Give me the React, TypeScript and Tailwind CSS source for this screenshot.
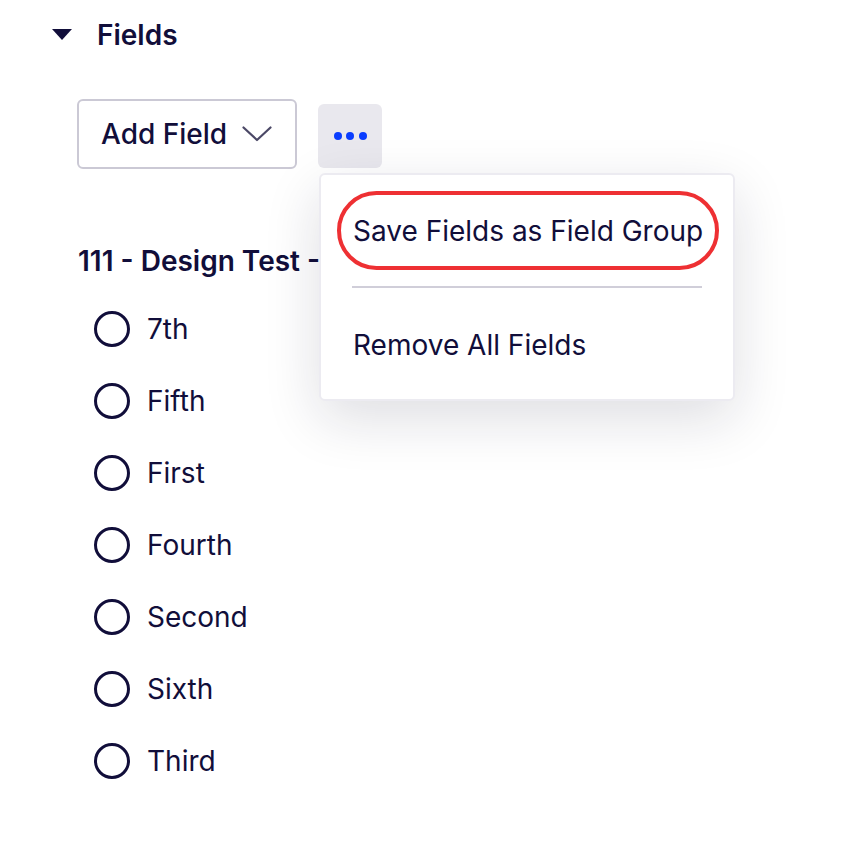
const options = ["7th", "Fifth", "First", "Fourth", "Second", "Sixth", "Third"];

const FieldsPanel = () => {
  return (
    <div className="min-h-screen bg-white font-['Inter','Noto_Sans',sans-serif] text-[#110e3a]">
      <div className="pl-[52px] pt-[19px]">
        {/* section header */}
        <div className="flex h-8 items-center gap-[25px]">
          <svg width="20" height="12" viewBox="0 0 20 12" aria-hidden>
            <path d="M0 0 H20 L10 11 Z" fill="#110e3a" />
          </svg>
          <span className="text-[28px] font-semibold leading-8">Fields</span>
        </div>

        {/* actions */}
        <div className="ml-[25px] mt-[48px] flex items-start gap-[21px]">
          <button className="flex h-[70px] w-[220px] items-center justify-between rounded-[6px] border-2 border-[#cbc9d5] bg-white pl-[22px] pr-[23px]">
            <span className="text-[28px] font-medium leading-8">Add Field</span>
            <svg width="30" height="16" viewBox="0 0 30 16" aria-hidden>
              <path d="M1.5 1.5 L15 14 L28.5 1.5" fill="none" stroke="#4b4866" strokeWidth="2.2" strokeLinecap="round" strokeLinejoin="round" />
            </svg>
          </button>

          <div className="relative mt-[5px]">
            <button className="flex h-[64px] w-[64px] items-center justify-center gap-[4.5px] rounded-[6px] bg-[#e9e8ee]">
              <span className="h-[8px] w-[8px] rounded-full bg-[#0a3dff]" />
              <span className="h-[8px] w-[8px] rounded-full bg-[#0a3dff]" />
              <span className="h-[8px] w-[8px] rounded-full bg-[#0a3dff]" />
            </button>

            {/* dropdown menu */}
            <div className="absolute left-px top-[69px] z-10 h-[228px] w-[416px] rounded-[6px] border-2 border-[#ecebf1] bg-white px-[16px] pt-[16px] shadow-[0_18px_56px_rgba(20,18,50,0.14)]">
              <div className="flex h-[79px] w-[382px] items-center rounded-full border-4 border-[#ee3033] pl-[12px]">
                <span className="whitespace-nowrap text-[28px] leading-8">Save Fields as Field Group</span>
              </div>
              <div className="ml-[15px] mt-[16px] h-[2px] w-[350px] bg-[#d0ced9]" />
              <div className="ml-[16px] mt-[41px] text-[28px] leading-8">Remove All Fields</div>
            </div>
          </div>
        </div>

        {/* field options */}
        <div className="ml-[26px] mt-[76px]">
          <div className="whitespace-nowrap text-[28px] font-semibold leading-8">111 - Design Test - Radio Buttons</div>
          <div className="mt-[16px] flex flex-col">
            {options.map((o) => (
              <label key={o} className="flex h-[72px] items-center gap-[17px] pl-[16px]">
                <span className="h-[36px] w-[36px] rounded-full border-[3px] border-[#110e3a]" />
                <span className="text-[28px] leading-8">{o}</span>
              </label>
            ))}
          </div>
        </div>
      </div>
    </div>
  );
};

export default function App() {
  return <FieldsPanel />;
}
